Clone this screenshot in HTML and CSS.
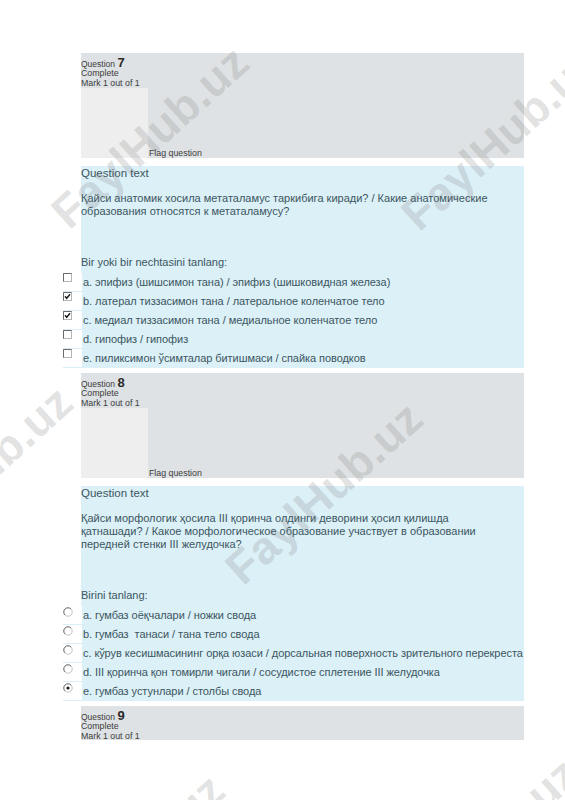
FILE: index.html
```html
<!DOCTYPE html>
<html lang="ru">
<head>
<meta charset="utf-8">
<title>Quiz review</title>
<link rel="stylesheet" href="styles.css">
</head>
<body>
<div class="page">
  <div class="quiz">
    <div class="info">
      <div class="qno">Question <b>7</b></div>
      <div class="state">Complete</div>
      <div class="grade">Mark 1 out of 1</div>
      <div class="flagrow"><div class="flagbox"></div><div class="flagtext">Flag question</div></div>
    </div>
    <div class="content">
      <div class="qtitle">Question text</div>
      <div class="qtext">
        <div class="ln">Қайси анатомик хосила метаталамус таркибига киради? / Какие анатомические</div>
        <div class="ln">образования относятся к метаталамусу?</div>
      </div>
      <div class="prompt">Bir yoki bir nechtasini tanlang:</div>
      <div class="opt"><div class="mark"><svg class="cb" width="9" height="9" viewBox="0 0 9 9"><rect x="0.5" y="0.5" width="8" height="8" fill="#fff" stroke="#b5b5b5"/><path d="M0.5 8.5V0.5H8.5" fill="none" stroke="#6b6b6b"/></svg></div><div class="label">a. эпифиз (шишсимон тана) / эпифиз (шишковидная железа)</div></div>
      <div class="opt"><div class="mark"><svg class="cb" width="9" height="9" viewBox="0 0 9 9"><rect x="0.5" y="0.5" width="8" height="8" fill="#fff" stroke="#b5b5b5"/><path d="M0.5 8.5V0.5H8.5" fill="none" stroke="#6b6b6b"/><path d="M2 4.3L3.7 6.3L7 2.3" fill="none" stroke="#1a1a1a" stroke-width="1.4"/></svg></div><div class="label">b. латерал тиззасимон тана / латеральное коленчатое тело</div></div>
      <div class="opt"><div class="mark"><svg class="cb" width="9" height="9" viewBox="0 0 9 9"><rect x="0.5" y="0.5" width="8" height="8" fill="#fff" stroke="#b5b5b5"/><path d="M0.5 8.5V0.5H8.5" fill="none" stroke="#6b6b6b"/><path d="M2 4.3L3.7 6.3L7 2.3" fill="none" stroke="#1a1a1a" stroke-width="1.4"/></svg></div><div class="label">c. медиал тиззасимон тана / медиальное коленчатое тело</div></div>
      <div class="opt"><div class="mark"><svg class="cb" width="9" height="9" viewBox="0 0 9 9"><rect x="0.5" y="0.5" width="8" height="8" fill="#fff" stroke="#b5b5b5"/><path d="M0.5 8.5V0.5H8.5" fill="none" stroke="#6b6b6b"/></svg></div><div class="label">d. гипофиз / гипофиз</div></div>
      <div class="opt"><div class="mark"><svg class="cb" width="9" height="9" viewBox="0 0 9 9"><rect x="0.5" y="0.5" width="8" height="8" fill="#fff" stroke="#b5b5b5"/><path d="M0.5 8.5V0.5H8.5" fill="none" stroke="#6b6b6b"/></svg></div><div class="label">e. пиликсимон ўсимталар битишмаси / спайка поводков</div></div>
    </div>

    <div class="info">
      <div class="qno">Question <b>8</b></div>
      <div class="state">Complete</div>
      <div class="grade">Mark 1 out of 1</div>
      <div class="flagrow"><div class="flagbox"></div><div class="flagtext">Flag question</div></div>
    </div>
    <div class="content">
      <div class="qtitle">Question text</div>
      <div class="qtext">
        <div class="ln">Қайси морфологик ҳосила III қоринча олдинги деворини ҳосил қилишда</div>
        <div class="ln">қатнашади? / Какое морфологическое образование участвует в образовании</div>
        <div class="ln">передней стенки III желудочка?</div>
      </div>
      <div class="prompt">Birini tanlang:</div>
      <div class="opt"><div class="mark"><svg class="rb" width="10" height="10" viewBox="0 0 10 10"><circle cx="5" cy="5" r="4.2" fill="#fff" stroke="#c2c2c2"/><path d="M2 8A4.2 4.2 0 0 1 8 2" fill="none" stroke="#7a7a7a"/></svg></div><div class="label">a. гумбаз оёқчалари / ножки свода</div></div>
      <div class="opt"><div class="mark"><svg class="rb" width="10" height="10" viewBox="0 0 10 10"><circle cx="5" cy="5" r="4.2" fill="#fff" stroke="#c2c2c2"/><path d="M2 8A4.2 4.2 0 0 1 8 2" fill="none" stroke="#7a7a7a"/></svg></div><div class="label">b. гумбаз&nbsp; танаси / тана тело свода</div></div>
      <div class="opt"><div class="mark"><svg class="rb" width="10" height="10" viewBox="0 0 10 10"><circle cx="5" cy="5" r="4.2" fill="#fff" stroke="#c2c2c2"/><path d="M2 8A4.2 4.2 0 0 1 8 2" fill="none" stroke="#7a7a7a"/></svg></div><div class="label">c. кўрув кесишмасининг орқа юзаси / дорсальная поверхность зрительного перекреста</div></div>
      <div class="opt"><div class="mark"><svg class="rb" width="10" height="10" viewBox="0 0 10 10"><circle cx="5" cy="5" r="4.2" fill="#fff" stroke="#c2c2c2"/><path d="M2 8A4.2 4.2 0 0 1 8 2" fill="none" stroke="#7a7a7a"/></svg></div><div class="label">d. III қоринча қон томирли чигали / сосудистое сплетение III желудочка</div></div>
      <div class="opt"><div class="mark"><svg class="rb" width="10" height="10" viewBox="0 0 10 10"><circle cx="5" cy="5" r="4.2" fill="#fff" stroke="#c2c2c2"/><path d="M2 8A4.2 4.2 0 0 1 8 2" fill="none" stroke="#7a7a7a"/><circle cx="5" cy="5" r="1.6" fill="#1a1a1a"/></svg></div><div class="label">e. гумбаз устунлари / столбы свода</div></div>
    </div>

    <div class="info short">
      <div class="qno">Question <b>9</b></div>
      <div class="state">Complete</div>
      <div class="grade">Mark 1 out of 1</div>
    </div>
  </div>

  <div class="wm wm1">FaylHub.uz</div>
  <div class="wm wm2">FaylHub.uz</div>
  <div class="wm wm3">FaylHub.uz</div>
  <div class="wm wm4">FaylHub.uz</div>
  <div class="wm wm5">FaylHub.uz</div>
  <div class="wm wm6">FaylHub.uz</div>
</div>
</body>
</html>
```
FILE: styles.css
```css
html, body {
  margin: 0;
  padding: 0;
  background: #ffffff;
}
body {
  font-family: "Liberation Sans", Arial, sans-serif;
}
.page {
  position: relative;
  width: 565px;
  height: 800px;
  overflow: hidden;
}
.quiz {
  margin-left: 81px;
  width: 443px;
  padding-top: 53px;
}
.info {
  background: #dfe2e4;
  height: 105px;
  box-sizing: border-box;
  padding-top: 4px;
  color: #3c3c3c;
}
.info.short {
  height: 34px;
}
.content + .info {
  margin-top: 5px;
}
.qno {
  font-size: 8.5px;
  line-height: 11px;
  height: 11px;
}
.qno b {
  font-size: 13px;
  font-weight: bold;
  color: #2a2a2a;
}
.state, .grade {
  font-size: 8.8px;
  line-height: 10px;
}
.flagrow {
  display: flex;
  align-items: flex-end;
  height: 70px;
}
.flagbox {
  width: 67px;
  height: 70px;
  background: #eeeeee;
}
.flagtext {
  font-size: 8.8px;
  line-height: 10px;
  margin-left: 1px;
}
.content {
  margin-top: 8px;
  background: #dcf0f7;
  color: #3b5661;
  font-size: 11px;
}
.qtitle {
  font-size: 11.5px;
  line-height: 14px;
}
.qtext {
  margin-top: 12px;
  line-height: 13px;
}
.ln {
  white-space: nowrap;
}
.prompt {
  margin-top: 37px;
  margin-bottom: 4px;
  line-height: 14px;
}
.opt {
  display: flex;
  height: 19px;
  margin-left: -18px;
}
.mark {
  width: 19px;
  flex: none;
  background: #ffffff;
  border-bottom: 1px solid #d9eef6;
  box-sizing: border-box;
}
.mark svg {
  display: block;
}
.rb {
  margin-top: 1px;
}
.label {
  flex: 1;
  line-height: 19px;
  padding-left: 1px;
  white-space: nowrap;
  letter-spacing: -0.06px;
}
.wm {
  position: absolute;
  font-family: "Liberation Sans", Arial, sans-serif;
  font-weight: bold;
  font-size: 46px;
  line-height: 46px;
  white-space: nowrap;
  color: rgba(110, 110, 110, 0.2);
  transform-origin: 0 100%;
  transform: rotate(-42deg);
  pointer-events: none;
}
.wm1 { left: 74px; top: 190px; }
.wm2 { left: 424px; top: 192px; }
.wm3 { left: -102px; top: 530px; }
.wm4 { left: 248px; top: 546px; }
.wm5 { left: 50px; top: 918px; }
.wm6 { left: 404px; top: 902px; }
```
